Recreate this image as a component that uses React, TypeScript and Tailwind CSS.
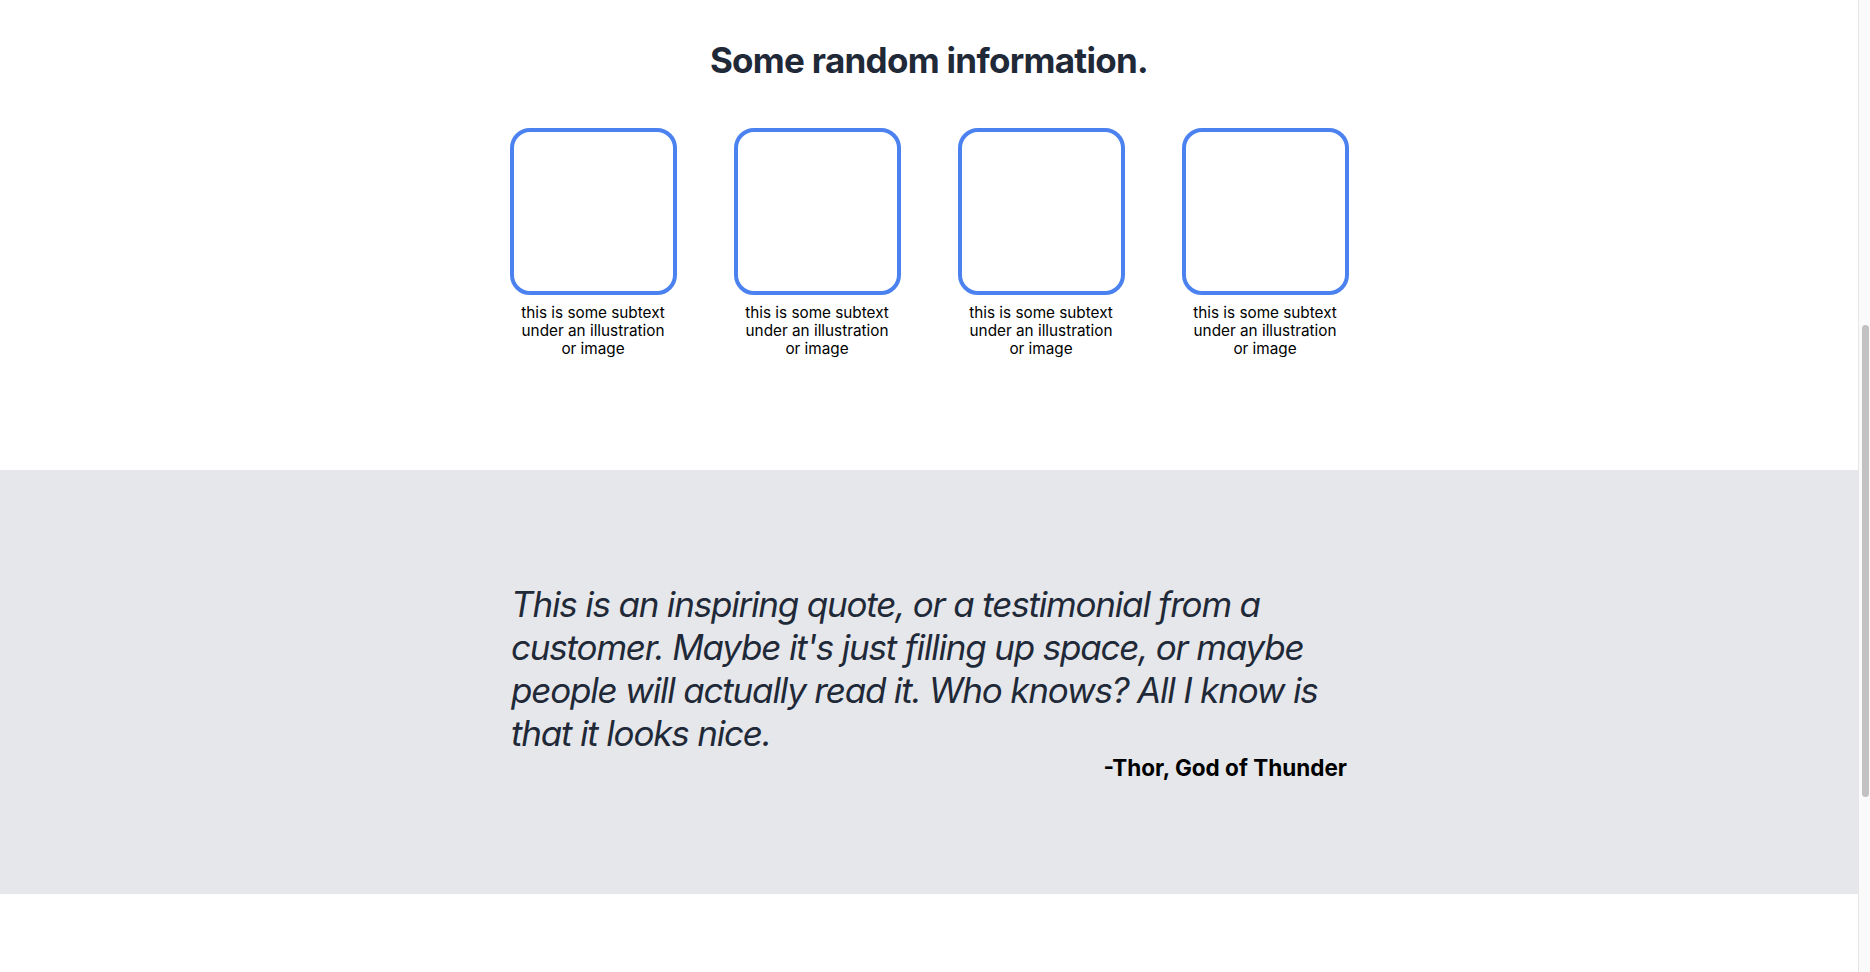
const cards = [1, 2, 3, 4];

const InfoCard = () => {
  return (
    <div className="flex w-[167px] flex-col items-center">
      <div className="h-[167px] w-[167px] rounded-[20px] border-4 border-[#4b82ef] bg-white" />
      <p className="mt-[9px] w-[152px] text-center text-[15.3px] leading-[18px] text-black">
        this is some subtext under an illustration or image
      </p>
    </div>
  );
};

const FakeScrollbar = () => {
  return (
    <div className="w-[12px] shrink-0 border-l border-[#e6e6e6] bg-[#fafafa]">
      <div className="ml-[3px] mt-[325px] h-[472px] w-[7px] rounded-full bg-[#c1c1c1]" />
    </div>
  );
};

export default function App() {
  return (
    <div
      className="flex h-screen w-full overflow-hidden bg-white"
      style={{ fontFamily: "Inter, 'Noto Sans', sans-serif" }}
    >
      <div className="flex flex-1 flex-col">
        {/* info section */}
        <section className="pb-[112px] pt-[39px]">
          <h2 className="text-center text-[35px] font-bold leading-[43px] tracking-[-0.02em] text-[#1f2937]">
            Some random information.
          </h2>
          <div className="mt-[46px] flex justify-center gap-[57px]">
            {cards.map((c) => (
              <InfoCard key={c} />
            ))}
          </div>
        </section>

        {/* quote */}
        <section className="bg-[#e5e7eb] py-[113px]">
          <div className="mx-auto w-[836px]">
            <p className="text-[35px] italic leading-[43px] tracking-[-0.034em] text-[#1f2937]">
              This is an inspiring quote, or a testimonial from a customer.
              Maybe it's just filling up space, or maybe people will actually
              read it. Who knows? All I know is that it looks nice.
            </p>
            <p className="text-right text-[22.5px] font-bold leading-[26px] text-black">
              -Thor, God of Thunder
            </p>
          </div>
        </section>

        <div className="flex-1 bg-white" />
      </div>
      <FakeScrollbar />
    </div>
  );
}
